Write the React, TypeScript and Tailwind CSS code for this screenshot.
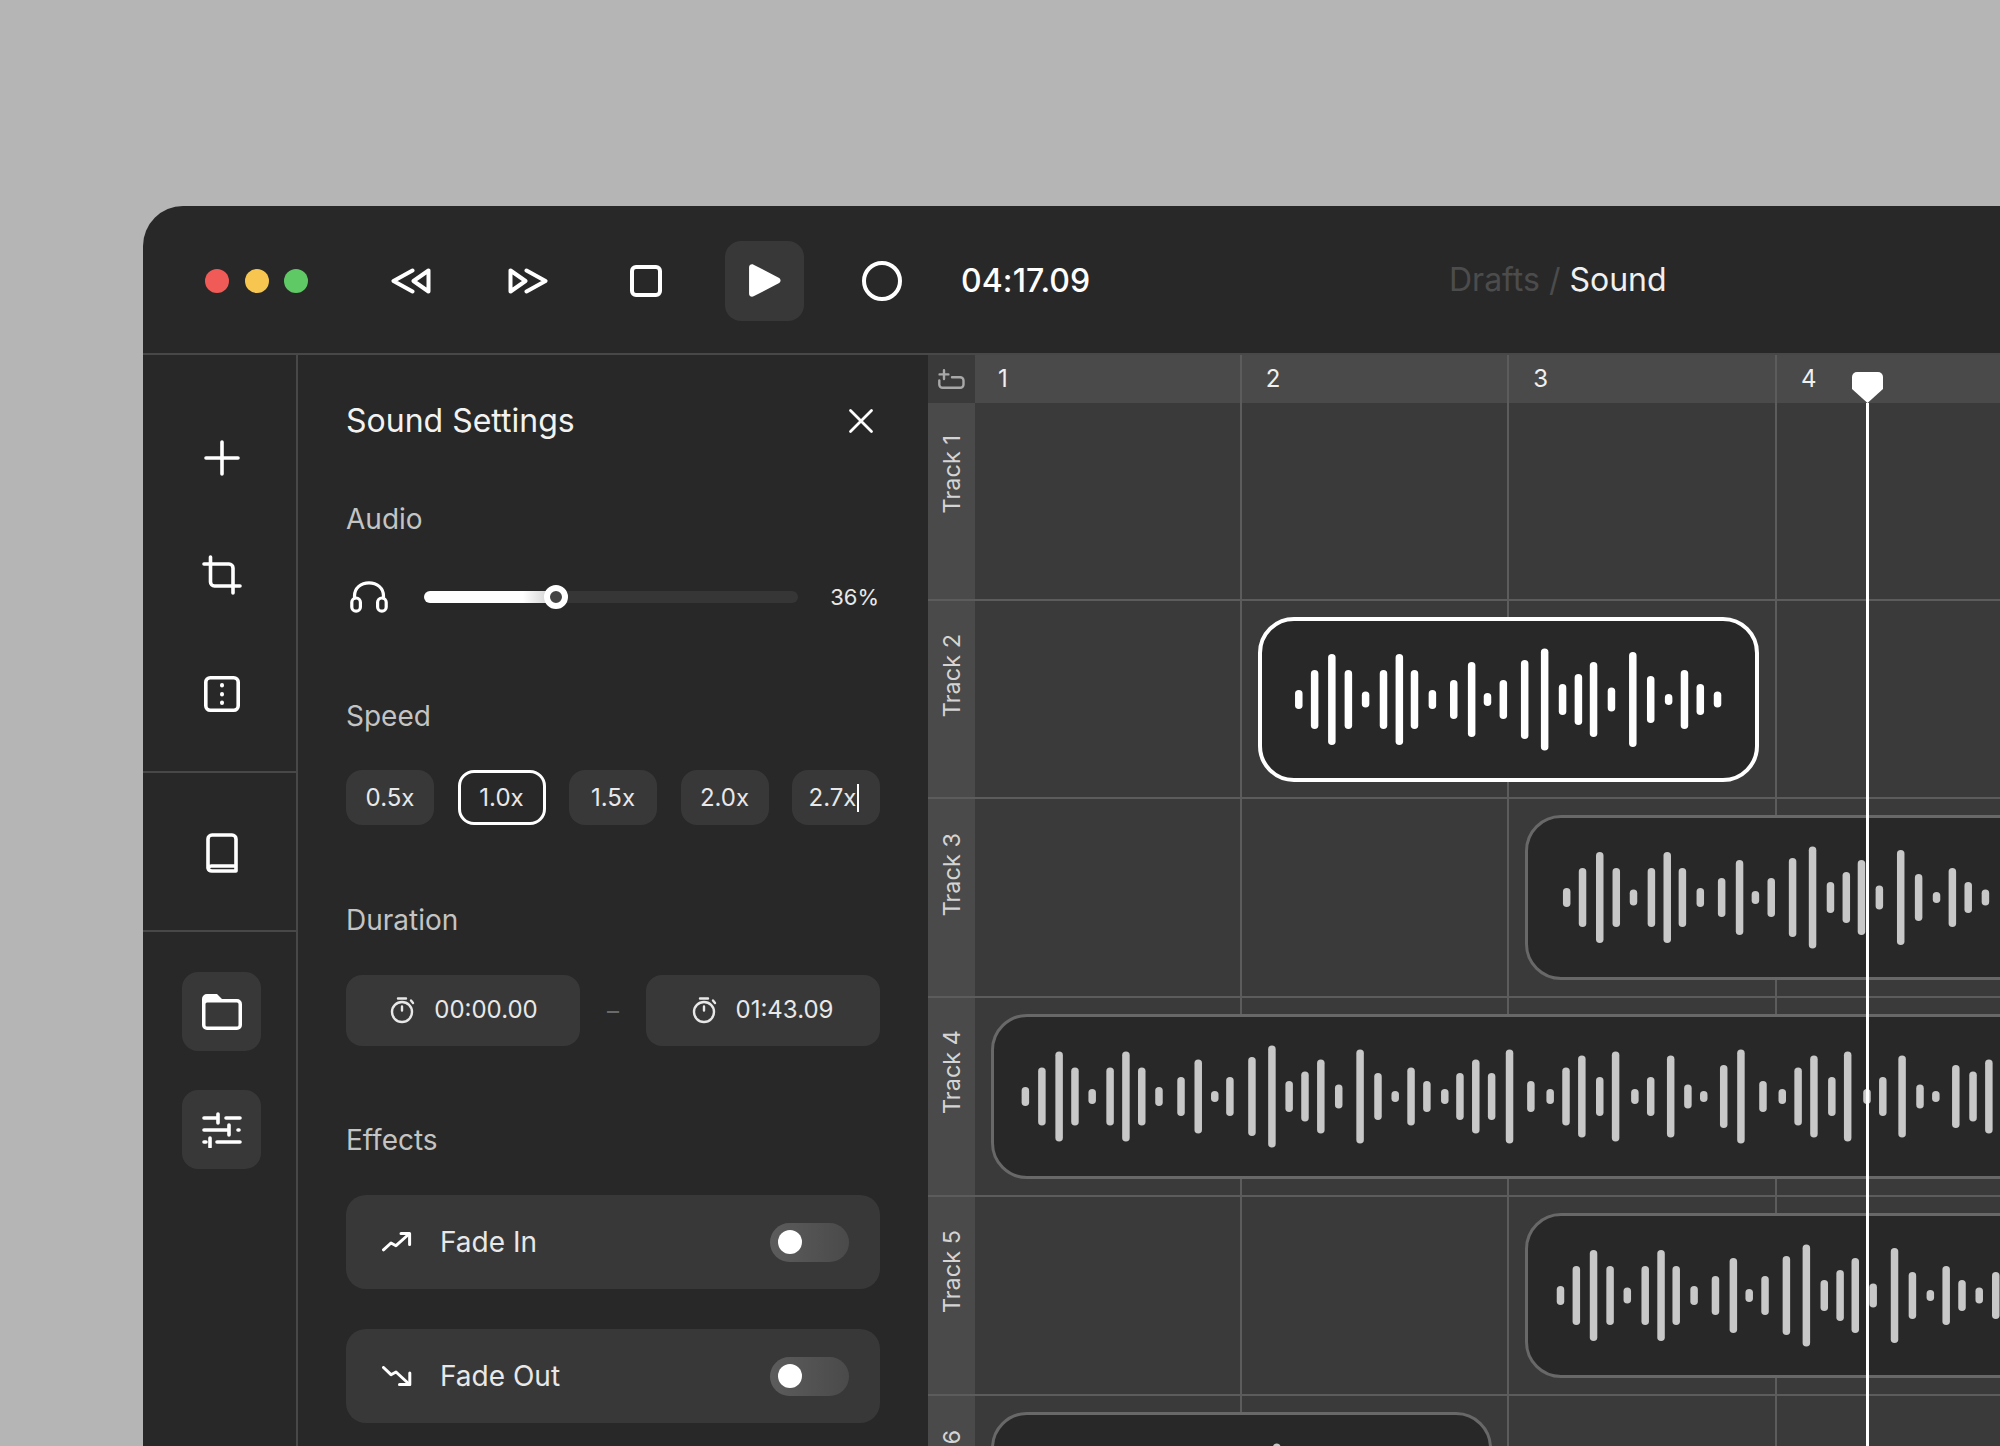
import React from "react";

type Bar = [number, number];

const BASE: Bar[] = [
  [550, 19], [573, 59], [598, 91], [622, 59], [647, 16], [673, 59], [696, 91], [718, 59], [744, 19],
  [775, 39], [801, 75], [824, 13], [847, 39], [878, 79], [907, 102], [933, 31], [956, 51], [978, 75],
  [1004, 24], [1035, 95], [1061, 47], [1087, 11], [1110, 59], [1133, 31], [1158, 16],
];

const LONG: Bar[] = [
  [153, 19], [177, 58], [202, 90], [225, 58], [250, 15], [276, 58], [299, 90], [322, 58], [347, 19],
  [379, 39], [404, 74], [428, 11], [450, 39], [482, 79], [511, 102], [536, 31], [559, 50], [582, 74],
  [608, 24], [639, 94], [665, 47], [690, 11], [713, 58], [736, 31], [762, 15], [784, 47], [807, 74],
  [830, 47], [856, 94], [887, 31], [915, 15], [938, 58], [961, 82], [987, 39], [1010, 90], [1038, 15],
  [1061, 39], [1090, 82], [1115, 24], [1138, 11], [1167, 63], [1192, 94], [1224, 31], [1252, 15],
  [1275, 58], [1298, 82], [1324, 39], [1347, 90], [1375, 15], [1398, 39], [1426, 82], [1452, 24],
  [1475, 11], [1504, 63], [1529, 50], [1552, 74],
];

const shift = (d: number): Bar[] => BASE.map(([z, h]) => [z + d, h] as Bar);

function Wave({ bars, clipLeft, border, color }: { bars: Bar[]; clipLeft: number; border: number; color: string }) {
  const cy = 82.5 - border;
  return (
    <svg className="block w-full h-full" fill={color}>
      {bars.map(([z, h], i) => (
        <rect key={i} x={z / 1.452 + 920 - clipLeft - border - 3.75} y={cy - h / 2} width={7.5} height={h} rx={3.75} />
      ))}
    </svg>
  );
}

const S = { fill: "none", stroke: "currentColor", strokeLinecap: "round", strokeLinejoin: "round" } as const;

function Rewind() {
  return (
    <svg width="40" height="26" viewBox="0 0 40 26" {...S} strokeWidth="4">
      <path d="M37.5 2.5V23.5L22.5 13Z" />
      <path d="M21.5 2.5L2.5 13L21.5 23.5" />
    </svg>
  );
}
function Forward() {
  return (
    <svg width="40" height="26" viewBox="0 0 40 26" {...S} strokeWidth="4">
      <path d="M2.5 2.5V23.5L17.5 13Z" />
      <path d="M18.5 2.5L37.5 13L18.5 23.5" />
    </svg>
  );
}
function Play() {
  return (
    <svg width="35" height="35" viewBox="0 0 34 34" fill="white">
      <path d="M2 4.2C2 1.8 4.4.5 6.4 1.6L30.8 14.3C33.2 15.6 33.2 18.4 30.8 19.7L6.4 32.4C4.4 33.5 2 32.2 2 29.8Z" />
    </svg>
  );
}
function Plus() {
  return (
    <svg width="36" height="36" viewBox="0 0 36 36" {...S} strokeWidth="3.6">
      <path d="M2 18H34M18 2V34" />
    </svg>
  );
}
function Crop() {
  return (
    <svg width="40" height="40" viewBox="0 0 40 40" {...S} strokeWidth="3.6">
      <path d="M8.5 2V27a4 4 0 0 0 4 4H38" />
      <path d="M31 38V13a4 4 0 0 0-4-4H2" />
    </svg>
  );
}
function Split() {
  return (
    <svg width="36" height="36" viewBox="0 0 36 36" {...S} strokeWidth="3.6">
      <rect x="1.8" y="1.8" width="32.4" height="32.4" rx="4.5" />
      <path d="M18 9V9.6M18 18V18.6M18 26.4V27" strokeWidth="4" />
    </svg>
  );
}
function Book() {
  return (
    <svg width="32" height="40" viewBox="0 0 32 40" {...S} strokeWidth="3.6">
      <path d="M2 35V6a4 4 0 0 1 4-4H26a4 4 0 0 1 4 4V38H6a4 4 0 0 1-4-3a4 4 0 0 1 4-2H30" />
    </svg>
  );
}
function Folder() {
  return (
    <svg width="40" height="36" viewBox="0 0 40 36" fill="white">
      <path
        fillRule="evenodd"
        d="M0 5a5 5 0 0 1 5-5H15l5 5H35a5 5 0 0 1 5 5V31a5 5 0 0 1-5 5H5a5 5 0 0 1-5-5ZM5 8.5a1.5 1.5 0 0 0-1.5 1.5V31a1.5 1.5 0 0 0 1.5 1.5H35a1.5 1.5 0 0 0 1.5-1.5V10a1.5 1.5 0 0 0-1.5-1.5Z"
      />
    </svg>
  );
}
function Sliders() {
  return (
    <svg width="40" height="36" viewBox="0 0 40 36" {...S} strokeWidth="3.6">
      <path d="M2 6H16M16 2V11M24 6H38" />
      <path d="M2 18H27M27 13V23M36 18H37" />
      <path d="M2 30H4M8 26V35M15 30H38" />
    </svg>
  );
}
function Headphones() {
  return (
    <svg width="38" height="32" viewBox="0 0 38 32" {...S} strokeWidth="3.2">
      <path d="M4.5 17V15C4.5 7 11 1.8 19 1.8S33.5 7 33.5 15V17" />
      <rect x="1.8" y="17" width="8.6" height="13.2" rx="4.3" />
      <rect x="27.6" y="17" width="8.6" height="13.2" rx="4.3" />
    </svg>
  );
}
function Timer() {
  return (
    <svg width="28" height="28" viewBox="0 0 28 28" {...S} strokeWidth="2.4">
      <circle cx="14" cy="16" r="10" />
      <path d="M10 2.5H18M14 10.5V14.5M23 4.5L25 7" />
    </svg>
  );
}
function FadeIn() {
  return (
    <svg width="30" height="20" viewBox="0 0 30 20" {...S} strokeWidth="3">
      <path d="M1.5 17.8L9 11L14 13.7L27 2" />
      <path d="M19 1.6H27.6V12.5" />
    </svg>
  );
}
function FadeOut() {
  return (
    <svg width="30" height="20" viewBox="0 0 30 20" {...S} strokeWidth="3">
      <path d="M1.5 1.5L9 8.7L14 6L27 18" />
      <path d="M17.5 18.6H27.8V7" />
    </svg>
  );
}
function AddTrack() {
  return (
    <svg width="27" height="21" viewBox="0 0 27 21" {...S} strokeWidth="2.4" className="text-[#a8a8a8]">
      <path d="M6 1.2V10M1.6 5.4H10.4" />
      <path d="M1.3 11.5V15.5A3.3 3.3 0 0 0 4.6 18.8H22.2A3.3 3.3 0 0 0 25.5 15.5V11.5A3.3 3.3 0 0 0 22.2 8.2H14" />
    </svg>
  );
}
function CloseX() {
  return (
    <svg width="26" height="26" viewBox="0 0 26 26" {...S} strokeWidth="2.8">
      <path d="M2.5 2.5L23.5 23.5M23.5 2.5L2.5 23.5" />
    </svg>
  );
}

function Toggle() {
  return (
    <div className="flex items-center w-[79px] h-[39px] rounded-full pl-[8px] bg-gradient-to-r from-[#5c5c5c] to-[#4a4a4a]">
      <div className="w-[24px] h-[24px] rounded-full bg-white" />
    </div>
  );
}

function EffectCard({ icon, label, className }: { icon: React.ReactNode; label: string; className?: string }) {
  return (
    <div className={"flex items-center h-[94px] rounded-[20px] bg-[#383838] pl-[36px] pr-[31px] " + (className ?? "")}>
      {icon}
      <span className="ml-[28px] text-[28px] leading-none text-[#e8e8e8]">{label}</span>
      <div className="ml-auto">
        <Toggle />
      </div>
    </div>
  );
}

function Chip({ label, active, caret }: { label: string; active?: boolean; caret?: boolean }) {
  return (
    <div
      className={
        "flex items-center justify-center w-[88px] h-[55px] rounded-[16px] text-[24px] text-[#e8e8e8] " +
        (active ? "border-[3px] border-white bg-[#282828]" : "bg-[#383838]") +
        (caret ? " pr-[4px]" : "")
      }
    >
      {label}
      {caret && <span className="inline-block w-[2px] h-[28px] bg-white ml-[1px]" />}
    </div>
  );
}

function TimeBox({ value, className }: { value: string; className?: string }) {
  return (
    <div
      className={
        "flex items-center justify-center gap-[18px] w-[234px] h-[71px] rounded-[16px] bg-[#383838] text-[24px] text-[#e8e8e8] pb-[2px] " +
        (className ?? "")
      }
    >
      <Timer />
      {value}
    </div>
  );
}

function Label({ children, className }: { children: string; className: string }) {
  return <div className={"text-[28px] leading-[36px] text-[#c4c4c4] " + className}>{children}</div>;
}

function TrackRow({
  name,
  rowClass,
  labelClass,
  children,
}: {
  name: string;
  rowClass: string;
  labelClass: string;
  children?: React.ReactNode;
}) {
  return (
    <div className={"relative z-20 flex box-border border-b-2 border-[#5c5c5c] " + rowClass}>
      <div className={"w-[47px] shrink-0 bg-[#4a4a4a] flex justify-center " + labelClass}>
        <span className="[writing-mode:vertical-rl] rotate-180 text-[23.5px] leading-none h-fit text-[#d4d4d4] whitespace-nowrap">
          {name}
        </span>
      </div>
      <div className="flex-1 min-w-0 pt-[16px]">{children}</div>
    </div>
  );
}

export default function App() {
  return (
    <div className="w-[2000px] h-[1446px] overflow-hidden bg-[#b5b5b5] pt-[206px] pl-[143px] font-['Inter',sans-serif]">
      <div className="w-[1857px] h-[1240px] rounded-tl-[40px] bg-[#282828] text-white flex flex-col overflow-hidden">
        {/* top bar */}
        <div className="h-[149px] shrink-0 box-border border-b-2 border-[#484848] flex items-center pl-[62px] pt-[2px]">
          <div className="flex gap-[15.5px]">
            <div className="w-[24px] h-[24px] rounded-full bg-[#f05a57]" />
            <div className="w-[24px] h-[24px] rounded-full bg-[#f7c651]" />
            <div className="w-[24px] h-[24px] rounded-full bg-[#5fc966]" />
          </div>
          <div className="ml-[83px]">
            <Rewind />
          </div>
          <div className="ml-[77px]">
            <Forward />
          </div>
          <div className="ml-[82px] w-[32px] h-[32px] box-border border-[4px] border-white rounded-[6px]" />
          <div className="ml-[63px] w-[79px] h-[80px] rounded-[16px] bg-[#383838] flex items-center justify-center">
            <Play />
          </div>
          <div className="ml-[58px] w-[40px] h-[40px] box-border border-[4px] border-white rounded-full" />
          <div className="ml-[59px] w-[128px] text-[32px] font-medium leading-none whitespace-nowrap tracking-[0.1px]">04:17.09</div>
          <div className="ml-[360px] mb-[2px] text-[32px] leading-none whitespace-nowrap">
            <span className="text-[#4c4c4c]">Drafts / </span>
            <span className="text-[#f0f0f0]">Sound</span>
          </div>
        </div>

        <div className="flex flex-1 min-h-0">
          {/* rail */}
          <div className="w-[155px] shrink-0 box-border border-r-2 border-[#484848] flex flex-col">
            <div className="box-border h-[418px] border-b-2 border-[#484848] flex flex-col items-center pt-[85px] pl-[4px]">
              <Plus />
              <div className="mt-[79px]">
                <Crop />
              </div>
              <div className="mt-[81px]">
                <Split />
              </div>
            </div>
            <div className="box-border h-[159px] border-b-2 border-[#484848] flex flex-col items-center pt-[60px] pl-[4px]">
              <Book />
            </div>
            <div className="flex flex-col items-center pt-[40px] gap-[39px] pl-[3px]">
              <div className="w-[79px] h-[79px] rounded-[16px] bg-[#383838] flex items-center justify-center pl-[2px]">
                <Folder />
              </div>
              <div className="w-[79px] h-[79px] rounded-[16px] bg-[#383838] flex items-center justify-center pl-[2px]">
                <Sliders />
              </div>
            </div>
          </div>

          {/* settings */}
          <div className="w-[630px] shrink-0 px-[48px] pt-[46px]">
            <div className="flex items-center justify-between h-[40px]">
              <div className="text-[32px] leading-[40px] text-[#f2f2f2]">Sound Settings</div>
              <div className="mr-[6px]">
                <CloseX />
              </div>
            </div>
            <Label className="mt-[60px]">Audio</Label>
            <div className="mt-[44px] flex items-center h-[32px]">
              <div className="ml-[4px]">
                <Headphones />
              </div>
              <div className="relative ml-[36px] w-[374px] h-[12px] rounded-full bg-[#363636]">
                <div className="h-full w-[132px] rounded-full bg-gradient-to-r from-white from-[75%] to-[#c8c8c8]" />
                <div className="absolute left-[120px] top-[-6px] w-[24px] h-[24px] box-border rounded-full border-[6px] border-white bg-[#444444]" />
              </div>
              <div className="ml-auto text-[22px] text-[#e8e8e8] leading-none mr-[1px]">36%</div>
            </div>
            <Label className="mt-[85px]">Speed</Label>
            <div className="mt-[36px] flex justify-between">
              <Chip label="0.5x" />
              <Chip label="1.0x" active />
              <Chip label="1.5x" />
              <Chip label="2.0x" />
              <Chip label="2.7x" caret />
            </div>
            <Label className="mt-[77px]">Duration</Label>
            <div className="mt-[37px] flex items-center justify-between">
              <TimeBox value="00:00.00" />
              <span className="text-[24px] text-[#6a6a6a]">–</span>
              <TimeBox value="01:43.09" className="pr-[3px]" />
            </div>
            <Label className="mt-[76px]">Effects</Label>
            <EffectCard className="mt-[37px]" icon={<FadeIn />} label="Fade In" />
            <EffectCard className="mt-[40px]" icon={<FadeOut />} label="Fade Out" />
          </div>

          {/* timeline */}
          <div className="relative flex-1 min-w-0 bg-[#3a3a3a] overflow-hidden">
            <div className="relative z-0 flex h-[48px] bg-[#4a4a4a]">
              <div className="w-[47px] shrink-0 bg-[#3a3a3a] flex items-center justify-center">
                <AddTrack />
              </div>
              {["1", "2", "3", "4"].map((n) => (
                <div key={n} className="w-[267.67px] shrink-0 pl-[23px] text-[24px] leading-[48px] text-[#f0f0f0]">
                  {n}
                </div>
              ))}
            </div>

            {/* bar lines */}
            <div className="absolute inset-y-0 left-[46px] z-10 flex pointer-events-none">
              <div className="w-[267.67px] box-border border-r-2 border-[#5c5c5c]" />
              <div className="w-[267.67px] box-border border-r-2 border-[#5c5c5c]" />
              <div className="w-[267.67px] box-border border-r-2 border-[#5c5c5c]" />
            </div>

            <TrackRow name="Track 1" rowClass="h-[198px]" labelClass="pt-[32px]" />
            <TrackRow name="Track 2" rowClass="h-[198px]" labelClass="pt-[33px]">
              <div className="ml-[283px] w-[501px] h-[165px] box-border rounded-[36px] border-4 border-white bg-[#282828] overflow-hidden">
                <Wave bars={BASE} clipLeft={1258} border={4} color="#ffffff" />
              </div>
            </TrackRow>
            <TrackRow name="Track 3" rowClass="h-[199px]" labelClass="pt-[34px]">
              <div className="ml-[550px] w-[700px] h-[165px] box-border rounded-[36px] border-[3px] border-[#686868] bg-[#282828] overflow-hidden">
                <Wave bars={shift(389)} clipLeft={1525} border={3} color="#c8c8c8" />
              </div>
            </TrackRow>
            <TrackRow name="Track 4" rowClass="h-[199px]" labelClass="pt-[32px]">
              <div className="ml-[16px] w-[1200px] h-[165px] box-border rounded-[36px] border-[3px] border-[#686868] bg-[#282828] overflow-hidden">
                <Wave bars={LONG} clipLeft={991} border={3} color="#c8c8c8" />
              </div>
            </TrackRow>
            <TrackRow name="Track 5" rowClass="h-[199px]" labelClass="pt-[33px]">
              <div className="ml-[550px] w-[700px] h-[165px] box-border rounded-[36px] border-[3px] border-[#686868] bg-[#282828] overflow-hidden">
                <Wave bars={[...shift(380), [1562, 47]]} clipLeft={1525} border={3} color="#c8c8c8" />
              </div>
            </TrackRow>
            <TrackRow name="Track 6" rowClass="h-[199px]" labelClass="pt-[34px]">
              <div className="ml-[16px] w-[501px] h-[165px] box-border rounded-[36px] border-[3px] border-[#686868] bg-[#282828] overflow-hidden">
                <Wave bars={shift(-389)} clipLeft={991} border={3} color="#c8c8c8" />
              </div>
            </TrackRow>

            {/* playhead */}
            <div className="absolute z-30 top-[17px] bottom-0 left-[924px] w-[31px] flex flex-col items-center">
              <svg width="31" height="31" viewBox="0 0 31 31" className="block shrink-0" fill="white">
                <path d="M5 0H26a5 5 0 0 1 5 5V17L15.5 31L0 17V5a5 5 0 0 1 5-5Z" />
              </svg>
              <div className="w-[3px] flex-1 bg-white" />
            </div>
          </div>
        </div>
      </div>
    </div>
  );
}
